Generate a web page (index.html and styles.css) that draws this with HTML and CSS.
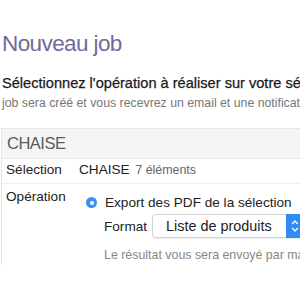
FILE: index.html
```html
<!DOCTYPE html>
<html lang="fr">

<head>
    <meta charset="UTF-8">
    <title>Nouveau job</title>
    <link rel="stylesheet" href="styles.css">
</head>

<body>
    <div class="page">
        <h1 class="title">Nouveau job</h1>
        <p class="lead">Sélectionnez l'opération à réaliser sur votre sélection</p>
        <p class="hint">job sera créé et vous recevrez un email et une notification lorsqu'il sera terminé.</p>

        <div class="panel">
            <div class="panel-head">CHAISE</div>
            <div class="row">
                <div class="label">Sélection</div>
                <div class="value">CHAISE <span class="count">7 éléments</span></div>
            </div>
            <div class="row row-op">
                <div class="label">Opération</div>
                <div class="value">
                    <div class="option">
                        <span class="radio"></span>
                        Export des PDF de la sélection
                    </div>
                    <div class="format">
                        <span>Format</span>
                        <div class="select">
                            <span class="select-text">Liste de produits</span>
                            <span class="select-arrow">
                                <svg width="8" height="14" viewBox="0 0 8 14">
                                    <path d="M1.2 5 L4 2 L6.8 5 M1.2 9 L4 12 L6.8 9" fill="none" stroke="#fff" stroke-width="1.3" />
                                </svg>
                            </span>
                        </div>
                    </div>
                    <p class="note">Le résultat vous sera envoyé par mail</p>
                </div>
            </div>
        </div>
    </div>
</body>

</html>
```

FILE: styles.css
```css
* {
    margin: 0;
    padding: 0;
    box-sizing: border-box;
}

body {
    font-family: "Liberation Sans", Arial, sans-serif;
    color: #333;
    background: #fff;
    overflow: hidden;
}

.page {
    width: 520px;
    padding: 29px 0 0 2px;
}

.title {
    font-weight: normal;
    font-size: 22.5px;
    color: #6d6b9b;
    line-height: 30px;
    letter-spacing: -0.6px;
}

.lead {
    margin-top: 14px;
    font-size: 14.6px;
    color: #1a1a1a;
    line-height: 20px;
    -webkit-text-stroke: 0.25px #1a1a1a;
}

.hint {
    margin-top: 2px;
    font-size: 12.3px;
    color: #777;
    line-height: 16px;
}

.panel {
    margin: 17px 0 0 -1px;
    height: 137px;
    border-left: 1px solid #e4e4e4;
    border-top: 1px solid #e6e6e6;
}

.panel-head {
    background: #f5f5f5;
    border-bottom: 1px solid #e6e6e6;
    font-size: 16.5px;
    color: #5a5a5a;
    padding: 5px 5px;
    line-height: 19px;
    letter-spacing: -0.5px;
}

.row {
    display: flex;
    border-bottom: 1px solid #eee;
    padding: 2px 0 4px 4px;
    font-size: 13.6px;
    line-height: 17px;
}

.row-op {
    padding-top: 4px;
    border-bottom: none;
}

.label {
    width: 73px;
    color: #222;
}

.value {
    color: #222;
}

.count {
    color: #666;
    font-size: 12.4px;
    margin-left: 2px;
}

.option {
    display: flex;
    align-items: center;
    gap: 8px;
    margin: 6px 0 0 7px;
}

.radio {
    width: 11px;
    height: 11px;
    border-radius: 50%;
    background: #3a8ff5;
    position: relative;
}

.radio::after {
    content: "";
    position: absolute;
    left: 3.5px;
    top: 3.5px;
    width: 4px;
    height: 4px;
    border-radius: 50%;
    background: #fff;
}

.format {
    display: flex;
    align-items: center;
    gap: 5px;
    margin: 3px 0 0 25px;
}

.select {
    display: flex;
    align-items: center;
    width: 151px;
    height: 24px;
    border: 1px solid #d4d4d4;
    border-radius: 4px;
    box-shadow: 0 1px 1px rgba(0, 0, 0, .08);
}

.select-text {
    flex: 1;
    padding-left: 13px;
    font-size: 14.4px;
}

.select-arrow {
    display: flex;
    align-items: center;
    justify-content: center;
    width: 17px;
    height: 24px;
    margin: -1px -1px -1px 0;
    border-radius: 0 4px 4px 0;
    background: #2d8cf5;
}

.note {
    margin: 9px 0 0 25px;
    font-size: 12.4px;
    color: #888;
}
```
